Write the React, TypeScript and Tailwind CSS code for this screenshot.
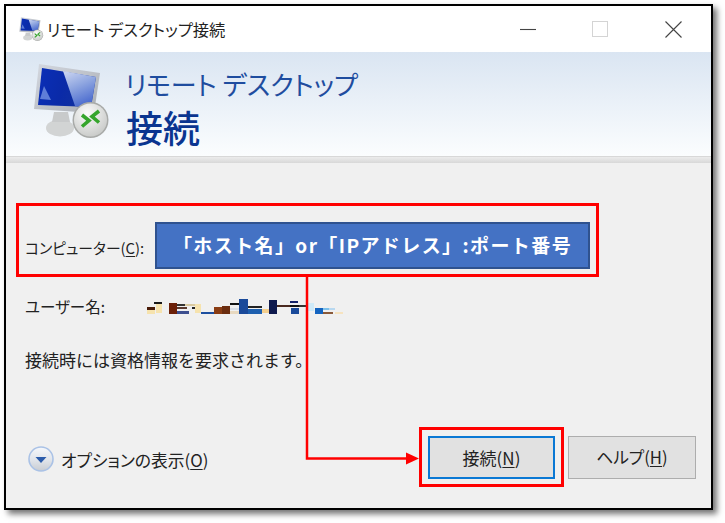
import React from "react";

const FONT = "font-['Noto_Sans_CJK_JP','Noto_Sans',sans-serif]";

function Monitor({ size, id }: { size: number; id: string }) {
  return (
    <svg width={size} height={size} viewBox="13 13 78 78" className="shrink-0">
      <defs>
        <linearGradient id={id + "f"} x1="0" y1="0" x2="1" y2="1">
          <stop offset="0" stopColor="#d4d8e0" />
          <stop offset="1" stopColor="#a9adb3" />
        </linearGradient>
        <linearGradient id={id + "s"} x1="0" y1="0" x2="1" y2="0.2">
          <stop offset="0" stopColor="#0a2fb8" />
          <stop offset="0.5" stopColor="#0a2aa8" />
          <stop offset="1" stopColor="#12329c" />
        </linearGradient>
        <linearGradient id={id + "r"} x1="0" y1="0" x2="0.4" y2="1">
          <stop offset="0" stopColor="#cfd8f2" />
          <stop offset="0.5" stopColor="#8fa6e0" />
          <stop offset="1" stopColor="#4f6fd0" />
        </linearGradient>
        <radialGradient id={id + "b"} cx="0.4" cy="0.3" r="0.8">
          <stop offset="0" stopColor="#fbfbfb" />
          <stop offset="1" stopColor="#c4c6c4" />
        </radialGradient>
      </defs>
      <ellipse cx="40" cy="78" rx="14" ry="8.5" fill="#d2d4d4" />
      <path d="M34 62h14l2 10H32z" fill="#c8cacb" />
      <polygon points="19,14 80,23 74,63 14,59" fill={`url(#${id}f)`} />
      <polygon points="22,18 76,27 71,57 18,55" fill={`url(#${id}s)`} />
      <polygon points="43,21 76,27 71,57 55,56" fill={`url(#${id}r)`} />
      <polygon points="24,36 31,50 20,49" fill="#5f7ed8" />
      <circle cx="70.5" cy="70" r="18" fill="#a8aaa8" />
      <circle cx="70.5" cy="70" r="16.5" fill={`url(#${id}b)`} />
      <path d="M62 65l7 5.5-7 6" fill="none" stroke="#35a52c" strokeWidth="3.6" />
      <path d="M79 61l-7 5.5 7 6" fill="none" stroke="#35a52c" strokeWidth="3.6" />
    </svg>
  );
}

function Redacted() {
  const r: [number, number, number, number, string][] = [
    [0, 6, 8, 7, "#f6e3ae"], [0, 6, 8, 3, "#4a1c08"], [7, 1, 8, 2, "#1a1a1a"], [9, 3, 6, 9, "#f6e3ae"],
    [22, 2, 8, 11, "#6b2008"], [30, 3, 8, 2, "#333"], [30, 6, 10, 2, "#5a3a30"], [30, 10, 12, 3, "#3d4f8f"],
    [38, 3, 13, 2, "#d9c9a0"], [45, 6, 9, 2, "#222"], [48, 3, 6, 9, "#f6e3ae"], [54, 11, 8, 2, "#1d4f9f"],
    [61, 11, 8, 2, "#1d4f9f"], [67, 6, 8, 7, "#8a3d14"], [75, 5, 8, 8, "#6b2d10"], [83, 2, 16, 2, "#111"],
    [83, 7, 12, 2, "#d9dfe8"], [83, 10, 12, 3, "#e8d9c0"], [92, -2, 9, 15, "#1a4a9a"], [101, 5, 14, 2, "#222"],
    [101, 8, 14, 5, "#1d5fae"], [115, 8, 11, 4, "#f4cf8e"], [122, -1, 8, 14, "#0f1a4e"], [130, 4, 14, 2, "#4a2a20"],
    [143, 4, 10, 2, "#111"], [143, 0, 8, 2, "#14226a"], [144, 7, 8, 6, "#1a4a9a"], [152, 4, 7, 2, "#333"],
    [161, 2, 6, 8, "#cfeaf8"], [168, 7, 14, 2, "#7cc0ea"], [168, 7, 8, 6, "#1464c0"], [176, 11, 10, 2, "#8a5a3a"],
    [182, 7, 6, 2, "#b8d8f0"], [188, 11, 8, 2, "#f6e3c0"],
  ];
  return (
    <svg width="196" height="16" viewBox="0 -2 196 16" className="shrink-0">
      {r.map(([x, y, w, h, c], i) => (
        <rect key={i} x={x} y={y} width={w} height={h} fill={c} />
      ))}
    </svg>
  );
}

function U({ children }: { children: React.ReactNode }) {
  return <span className="underline underline-offset-2">{children}</span>;
}

export default function App() {
  return (
    <div className={`relative w-[725px] h-[523px] bg-white pt-1 pl-1 overflow-hidden ${FONT} text-[#222]`}>
      <div className="flex flex-col w-[709px] h-[506px] border-2 border-black bg-[#f0f0f0] shadow-[4px_4px_6px_rgba(0,0,0,0.55)]">
        {/* Title bar */}
        <div className="flex items-center h-[46px] bg-white pl-[13px] shrink-0">
          <Monitor size={25} id="t" />
          <span className="ml-[3px] text-[16.3px] leading-none text-[#222] [font-feature-settings:'palt']">リモート デスクトップ接続</span>
          <div className="ml-auto flex items-center pr-[29px]">
            <svg width="17" height="17" viewBox="0 0 17 17" className="mr-[55px]">
              <path d="M0 8.5h16" stroke="#444" strokeWidth="1.1" />
            </svg>
            <svg width="17" height="17" viewBox="0 0 17 17" className="mr-[56px]">
              <rect x="0.5" y="0.5" width="15" height="15" fill="#fff" stroke="#d4d4d4" />
            </svg>
            <svg width="17" height="17" viewBox="0 0 17 17">
              <path d="M0.5 0.5l16 16M16.5 0.5l-16 16" stroke="#444" strokeWidth="1.1" />
            </svg>
          </div>
        </div>

        {/* Banner */}
        <div className="flex h-[105px] shrink-0 bg-gradient-to-b from-[#dae5f2] to-[#fbfdfe] pl-[27px] pt-[11px] border-b border-[#d8d8d8]">
          <Monitor size={78} id="b" />
          <div className="flex flex-col ml-[14px] [font-feature-settings:'palt']">
            <span className="text-[26px] leading-[44px] mt-[-1px] font-normal text-[#1f4d9f]">リモート デスクトップ</span>
            <span className="text-[37px] leading-[40px] font-medium text-[#0a3590] ml-[1px] mt-[1px]">接続</span>
          </div>
        </div>
        <div className="h-[6px] shrink-0 bg-gradient-to-b from-[#ececec] to-[#d8d8d8]" />

        {/* Body */}
        <div className="flex flex-col flex-1 pl-[10px]">
          <div className="flex items-start mt-[40px] w-[583px] h-[74px] border-[3px] border-[#ff0000] pl-[6px] pt-[16px]">
            <span className="w-[130px] mt-[19px] text-[14.8px] leading-none [font-feature-settings:'palt'] whitespace-nowrap">
              コンピューター(<U>C</U>):
            </span>
            <div className="flex items-center justify-center w-[435px] h-[47px] border-2 border-[#2f528f] bg-[#4472c4] text-white text-[19px] tracking-[1.4px] font-bold whitespace-nowrap">
              「ホスト名」or「IPアドレス」:ポート番号
            </div>
          </div>

          <div className="flex items-center mt-[20px] pl-[9px] h-[20px]">
            <span className="w-[122px] text-[15.5px] leading-none [font-feature-settings:'palt']">ユーザー名:</span>
            <Redacted />
          </div>

          <div className="mt-[33px] pl-[9px] text-[17px] leading-[20px] whitespace-nowrap">接続時には資格情報を要求されます。</div>

          <div className="flex items-center mt-auto mb-[21px]">
            <svg width="26" height="28" viewBox="0 0 26 28" className="ml-[12px] mt-[4px]">
              <defs>
                <linearGradient id="opt" x1="0" y1="0" x2="0" y2="1">
                  <stop offset="0" stopColor="#f6f8fb" />
                  <stop offset="0.55" stopColor="#e0e4ea" />
                  <stop offset="1" stopColor="#c8ccd2" />
                </linearGradient>
              </defs>
              <circle cx="13" cy="14" r="12" fill="url(#opt)" stroke="#aac2e6" strokeWidth="1.6" />
              <path d="M7.5 12h11L13 18z" fill="#2c5cab" />
            </svg>
            <span className="ml-[7px] mt-[6px] text-[16.8px] leading-none [font-feature-settings:'palt']">
              オプションの表示(<U>O</U>)
            </span>
            <div className="flex items-center justify-center ml-auto w-[145px] h-[60px] border-[3px] border-[#ff0000]">
              <div className="flex items-center justify-center w-[127px] h-[43px] border-2 border-[#0a78d4] bg-[#e1e1e1] text-[17px] leading-none [font-feature-settings:'palt']">
                接続(<U>N</U>)
              </div>
            </div>
            <div className="flex items-center justify-center ml-[4px] mr-[15px] w-[128px] h-[43px] border border-[#adadad] bg-[#e1e1e1] text-[16.7px] leading-none [font-feature-settings:'palt']">
              ヘルプ(<U>H</U>)
            </div>
          </div>
        </div>
      </div>

      {/* Annotation connector */}
      <svg className="absolute left-0 top-0 pointer-events-none" width="725" height="523" viewBox="0 0 725 523">
        <path d="M307 277V458.500H408" fill="none" stroke="#ff0000" strokeWidth="2.5" />
        <path d="M406 452.500L419 458.500L406 464.500z" fill="#ff0000" />
      </svg>
    </div>
  );
}
